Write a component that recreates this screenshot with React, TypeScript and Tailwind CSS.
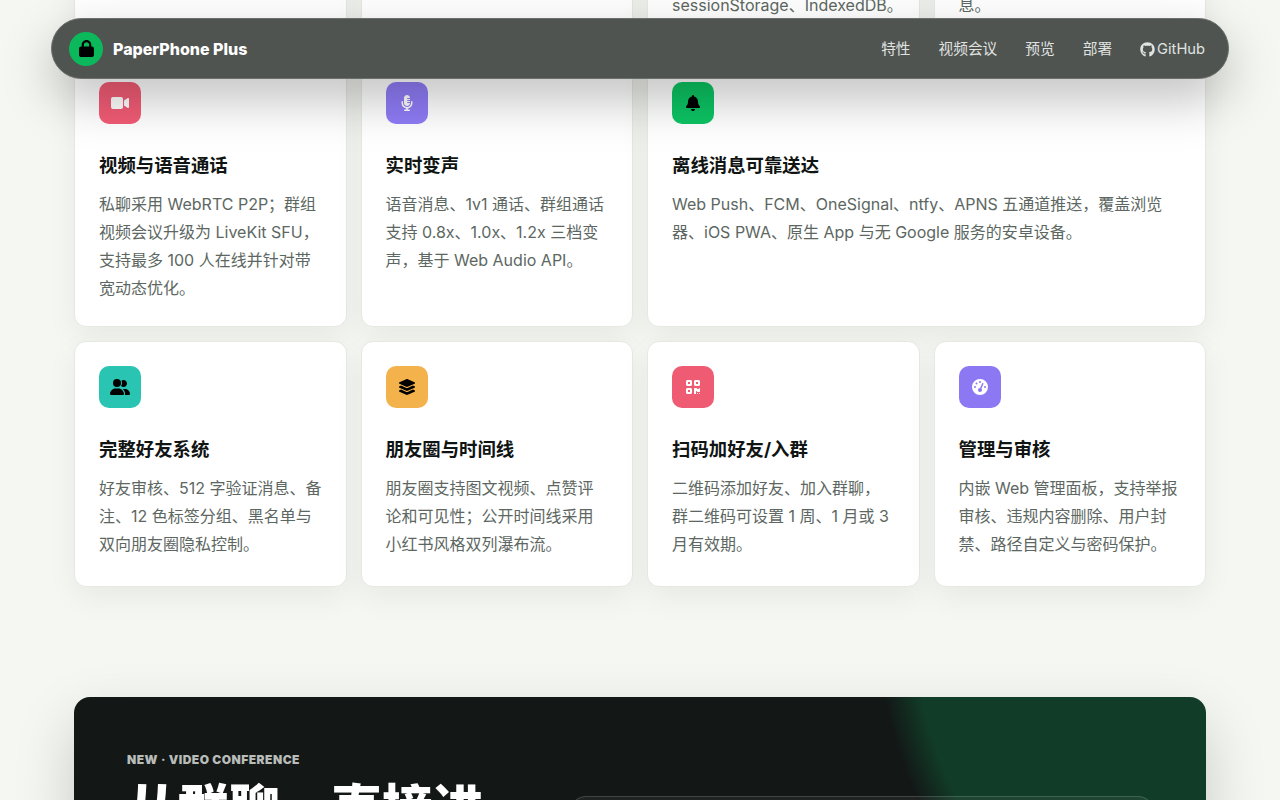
import type { ReactNode } from "react";
import {
  FaBell,
  FaGaugeHigh,
  FaGithub,
  FaLayerGroup,
  FaLock,
  FaMicrophoneLines,
  FaQrcode,
  FaShieldHalved,
  FaUserGroup,
  FaVideo,
  FaComments,
  FaKey,
  FaDatabase,
} from "react-icons/fa6";

const font = "font-['Inter','Noto_Sans_CJK_SC',sans-serif]";

type Feature = {
  title: string;
  desc: string;
  icon: ReactNode;
  tile: string;
  wide?: boolean;
};

// scrolled out of view, only the last lines peek out above the navbar
const hiddenRow: Feature[] = [
  {
    title: "端到端加密",
    desc: "基于 X3DH 与 Double Ratchet\n协议，消息仅收发双方可读。",
    icon: <FaShieldHalved />,
    tile: "bg-[#0bb85c] text-black",
  },
  {
    title: "群组聊天",
    desc: "支持图片、语音、文件与表情，\n多端消息实时同步。",
    icon: <FaComments />,
    tile: "bg-[#7c6fe6] text-white",
  },
  {
    title: "本地安全存储",
    desc: "会话密钥仅保存在浏览器中，\n可选择 localStorage、\nsessionStorage、IndexedDB。",
    icon: <FaDatabase />,
    tile: "bg-[#f4b24d] text-black",
  },
  {
    title: "阅后即焚",
    desc: "可为每个会话设置消息保留\n时长，到期后自动清除历史消\n息。",
    icon: <FaKey />,
    tile: "bg-[#ef5b73] text-white",
  },
];

const middleRow: Feature[] = [
  {
    title: "视频与语音通话",
    desc: "私聊采用 WebRTC P2P；群组视频会议升级为 LiveKit SFU，支持最多 100 人在线并针对带宽动态优化。",
    icon: <FaVideo className="text-[18px]" />,
    tile: "bg-[#f25c75] text-white",
  },
  {
    title: "实时变声",
    desc: "语音消息、1v1 通话、群组通话支持 0.8x、1.0x、1.2x 三档变声，基于 Web Audio API。",
    icon: <FaMicrophoneLines />,
    tile: "bg-[#8f7cf7] text-white",
  },
  {
    title: "离线消息可靠送达",
    desc: "Web Push、FCM、OneSignal、ntfy、APNS 五通道推送，覆盖浏览器、iOS PWA、原生 App 与无 Google 服务的安卓设备。",
    icon: <FaBell />,
    tile: "bg-[#0cc463] text-black",
    wide: true,
  },
];

const lastRow: Feature[] = [
  {
    title: "完整好友系统",
    desc: "好友审核、512 字验证消息、备注、12 色标签分组、黑名单与双向朋友圈隐私控制。",
    icon: <FaUserGroup className="text-[20px]" />,
    tile: "bg-[#2ac4b3] text-black",
  },
  {
    title: "朋友圈与时间线",
    desc: "朋友圈支持图文视频、点赞评论和可见性；公开时间线采用小红书风格双列瀑布流。",
    icon: <FaLayerGroup className="text-[18px]" />,
    tile: "bg-[#f4b24d] text-black",
  },
  {
    title: "扫码加好友/入群",
    desc: "二维码添加好友、加入群聊，群二维码可设置 1 周、1 月或 3 月有效期。",
    icon: <FaQrcode />,
    tile: "bg-[#ef5b73] text-white",
  },
  {
    title: "管理与审核",
    desc: "内嵌 Web 管理面板，支持举报审核、违规内容删除、用户封禁、路径自定义与密码保护。",
    icon: <FaGaugeHigh />,
    tile: "bg-[#8b78f2] text-white",
  },
];

function FeatureCard({ item }: { item: Feature }) {
  const manualBreaks = item.desc.includes("\n");

  return (
    <div
      className={`rounded-[12px] border border-[#e6e8e2] bg-white px-6 pt-6 shadow-[0_10px_30px_rgba(0,0,0,0.06)] ${
        manualBreaks ? "pb-[23px]" : "pb-6"
      } ${item.wide ? "col-span-2" : ""}`}
    >
      <div className={`flex h-[42px] w-[42px] items-center justify-center rounded-[10px] text-[16px] ${item.tile}`}>
        {item.icon}
      </div>
      <h3 className="mt-[27px] text-[18.4px] leading-[28px] font-bold text-[#101412]">{item.title}</h3>
      <p
        className={`text-[16px] leading-[28px] text-[#5d6762] ${
          manualBreaks ? "mt-[12px] whitespace-pre" : "mt-[11px]"
        }`}
      >
        {item.desc}
      </p>
    </div>
  );
}

function Navbar() {
  return (
    <nav className="absolute top-[18px] right-[51px] left-[51px] z-10 flex h-[61px] items-center justify-between rounded-full border border-[#6b706c] bg-[#4f5451] pt-[1px] pr-[23px] pl-[17px] shadow-[0_20px_50px_rgba(0,0,0,0.25)]">
      <div className="flex items-center gap-[10px]">
        <div className="mt-[-1px] flex h-[34px] w-[34px] items-center justify-center rounded-full bg-[#0bb85c] text-[17px] text-black">
          <FaLock />
        </div>
        <span className="text-[16px] font-extrabold text-white">PaperPhone Plus</span>
      </div>
      <div className="flex items-center gap-7 pt-[1px] text-[14.7px] text-[#e0e3e0]">
        <span>特性</span>
        <span>视频会议</span>
        <span>预览</span>
        <span>部署</span>
        <span className="flex items-center gap-[2px]">
          <FaGithub className="text-[15px]" />
          GitHub
        </span>
      </div>
    </nav>
  );
}

export default function App() {
  return (
    <div className={`relative h-screen overflow-hidden bg-[#f5f7f2] ${font}`}>
      <Navbar />
      <main className="mx-auto mt-[-199px] flex w-[1132px] flex-col">
        <div className="grid grid-cols-4 grid-rows-[auto_auto_246px] gap-[14px]">
          {hiddenRow.map((item) => (
            <FeatureCard key={item.title} item={item} />
          ))}
          {middleRow.map((item) => (
            <FeatureCard key={item.title} item={item} />
          ))}
          {lastRow.map((item) => (
            <FeatureCard key={item.title} item={item} />
          ))}
        </div>

        <section className="mt-[110px] flex h-[400px] gap-10 rounded-[16px] bg-[#131817] bg-[radial-gradient(circle_at_1226px_-77px,#113c27_386px,#131817_422px)] py-[52px] pr-[52px] pl-[53px] shadow-[0_24px_60px_rgba(0,0,0,0.18)]">
          <div className="w-[403px] shrink-0">
            <div className="mt-[1px] text-[12px] leading-5 font-black tracking-[0.04em] text-[#b9bcb9] uppercase">
              New · Video Conference
            </div>
            <h2 className="mt-[9px] text-[51px] leading-[60px] font-black text-white">从群聊，直接进</h2>
          </div>
          <div className="mt-[47px] h-[300px] flex-1 rounded-[16px] border border-white/15 bg-white/5" />
        </section>
      </main>
    </div>
  );
}
